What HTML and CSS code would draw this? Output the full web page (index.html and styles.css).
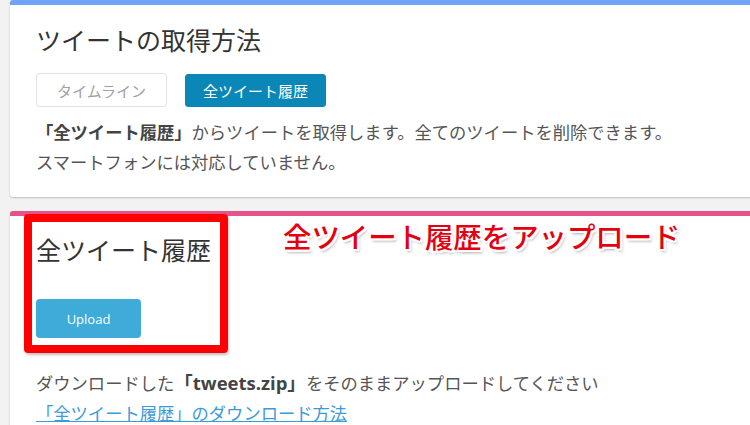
FILE: index.html
```html
<!DOCTYPE html>
<html>
<head>
  <meta charset="UTF-8">
  <meta name="viewport" content="width=device-width, initial-scale=1.0">
  <title>ツイートの取得方法</title>
  <link rel="stylesheet" href="styles.css">
</head>
<body>

  <div class="page">
    <div class="card card-blue">
      <h1 class="title">ツイートの取得方法</h1>
      <div class="tabs">
        <button class="tab">タイムライン</button>
        <button class="tab tab-active">全ツイート履歴</button>
      </div>
      <p class="desc">
        <b>「全ツイート履歴」</b>からツイートを取得します。全てのツイートを削除できます。<br>
        スマートフォンには対応していません。
      </p>
    </div>

    <div class="card card-pink">
      <h1 class="title">全ツイート履歴</h1>
      <button class="upload">Upload</button>
      <p class="desc desc-bottom">
        ダウンロードした<b class="file">「tweets.zip」</b>をそのままアップロードしてください<br>
        <a href="#" class="link">「全ツイート履歴」のダウンロード方法</a>
      </p>

      <div class="mark"></div>
      <div class="note">全ツイート履歴をアップロード</div>
    </div>
  </div>

</body>
</html>
```

FILE: styles.css
```css
* {
  margin: 0;
  padding: 0;
  box-sizing: border-box;
}

body {
  background: #f2f2f2;
  font-family: "Noto Sans CJK JP", "Noto Sans", sans-serif;
  color: #555;
  overflow: hidden;
}

.page {
  height: 100vh;
  overflow: hidden;
  padding-left: 10px;
}

.card {
  position: relative;
  width: calc(100% + 20px);
  background: #fff;
  border-radius: 3px;
  box-shadow: 0 1px 2px rgba(0, 0, 0, 0.22);
  padding: 0 26px;
}
.card-blue {
  border-top: 5px solid #6fa3f6;
  padding-top: 19px;
  padding-bottom: 20px;
}
.card-pink {
  margin-top: 14px;
  border-top: 5px solid #e4538a;
  padding-top: 18px;
  padding-bottom: 20px;
}

.title {
  font-size: 25px;
  font-weight: 400;
  line-height: 30px;
  color: #333;
}

.tabs {
  display: flex;
  gap: 18px;
  margin-top: 19px;
}
.tab {
  width: 131px;
  height: 34px;
  border: 1px solid #e3e3e3;
  border-radius: 3px;
  background: #fff;
  color: #a0a0a0;
  font-family: inherit;
  font-size: 15px;
}
.tab-active {
  width: 141px;
  height: 33px;
  margin-top: 1px;
  border-color: #0a87b6;
  background: #0a87b6;
  color: #fff;
}

.desc {
  margin-top: 10px;
  font-size: 17.3px;
  line-height: 30px;
}
.desc b {
  color: #444;
}

.upload {
  display: block;
  margin-top: 35px;
  width: 105px;
  height: 39px;
  border: 0;
  border-radius: 4px;
  background: #3eabd9;
  color: #fff;
  font-family: "Open Sans", sans-serif;
  font-size: 13px;
}

.desc-bottom {
  margin-top: 30px;
}
.file {
  font-family: "Open Sans", "Noto Sans CJK JP", sans-serif;
  font-size: 18.5px;
}
.link {
  color: #3b9bd8;
  text-decoration: underline;
}

/* annotations laid over the screenshot */
.mark {
  position: absolute;
  left: 14px;
  top: -2px;
  width: 204px;
  height: 139px;
  border: 8px solid #ff0000;
  border-radius: 4px;
  box-shadow: 1px 2px 3px rgba(0, 0, 0, 0.25);
}
.note {
  position: absolute;
  left: 273px;
  top: 3px;
  font-size: 28.4px;
  font-weight: 500;
  line-height: 34px;
  color: #e4000f;
  text-shadow:
    -2px 0 0 #fff, 2px 0 0 #fff, 0 -2px 0 #fff, 0 2px 0 #fff,
    -2px -2px 0 #fff, 2px 2px 0 #fff, -2px 2px 0 #fff, 2px -2px 0 #fff,
    2px 3px 3px rgba(0, 0, 0, 0.35);
}
```
